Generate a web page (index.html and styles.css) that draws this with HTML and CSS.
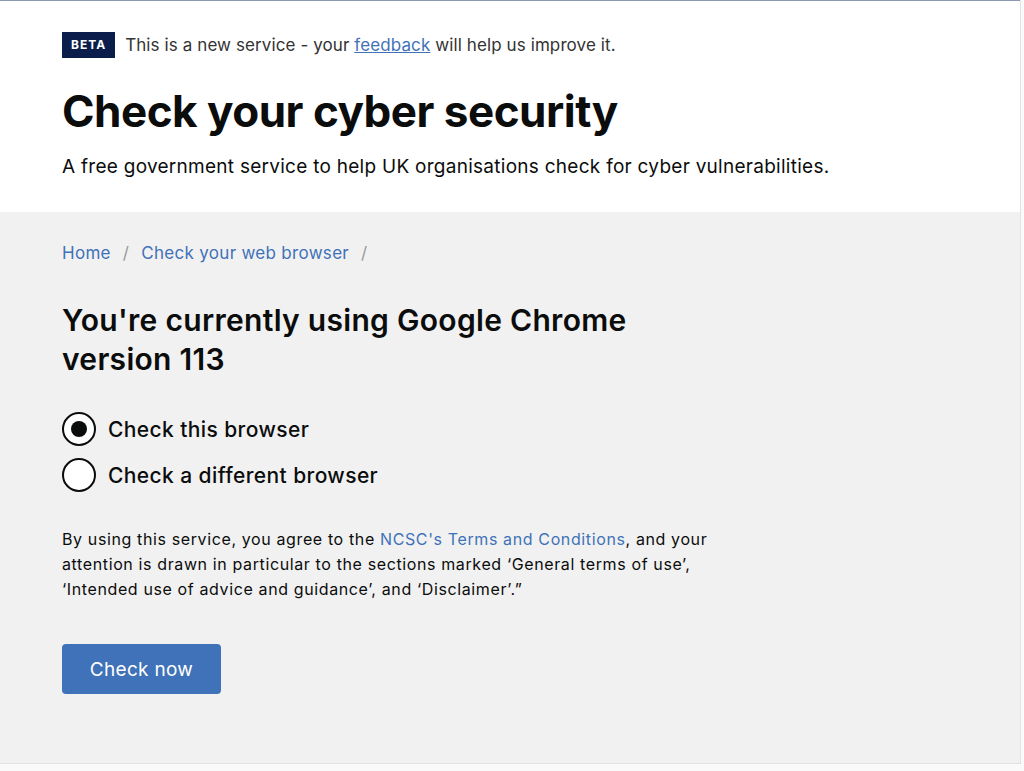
FILE: index.html
```html
<!DOCTYPE html>
<html>
	<head>
		<meta charset='utf-8'/>
		<title>Check your cyber security</title>
		<link rel="stylesheet" href="styles.css">
	</head>
	<body>
		<div class=page>
			<div class=header>
				<div class=phase>
					<strong class=tag>BETA</strong>
					<span>This is a new service - your <a href="#">feedback</a> will help us improve it.</span>
				</div>
				<h1>Check your cyber security</h1>
				<p class=lead>A free government service to help UK organisations check for cyber vulnerabilities.</p>
			</div>
			<div class=main>
				<ol class=crumbs>
					<li><a href="#">Home</a></li>
					<li><a href="#">Check your web browser</a></li>
				</ol>
				<h2>You're currently using Google Chrome version 113</h2>
				<div class=radios>
					<label class=radio><span class="dot checked"></span>Check this browser</label>
					<label class=radio><span class=dot></span>Check a different browser</label>
				</div>
				<p class=terms>By using this service, you agree to the <a href="#">NCSC's Terms and Conditions</a>, and your attention is drawn in particular to the sections marked ‘General terms of use’, ‘Intended use of advice and guidance’, and ‘Disclaimer’.”</p>
				<button class=button>Check now</button>
			</div>
		</div>
	</body>
</html>
```
FILE: styles.css
```css
body {
	margin: 0;
	background: #fafafa;
	font-family: Inter, "Liberation Sans", sans-serif;
	color: #0b0c0c;
}
.page {
	width: 1020px;
	border-right: 1px solid #e2e2e2;
	border-bottom: 1px solid #e2e2e2;
	background: #f1f1f1;
}
a {
	color: #3f72b8;
	text-decoration: none;
}
.header {
	background: #fff;
	border-top: 1px solid #8b98b3;
	padding: 31px 62px 31px;
}
.phase {
	display: flex;
	align-items: center;
	gap: 10px;
	font-size: 17px;
	letter-spacing: 0.1px;
	color: #333;
}
.phase a {
	text-decoration: underline;
}
.tag {
	background: #0b1e4b;
	color: #fff;
	font-size: 12px;
	letter-spacing: 1px;
	padding: 6px 9px 6px;
	line-height: 14px;
}
h1 {
	font-size: 44px;
	font-weight: 700;
	margin: 24px 0 0;
	line-height: 58px;
	letter-spacing: -0.5px;
}
.lead {
	margin: 13px 0 0;
	font-size: 19px;
	letter-spacing: 0.27px;
	line-height: 28px;
}
.main {
	padding: 28px 62px 69px;
	height: 454px;
}
.crumbs {
	list-style: none;
	margin: 0;
	padding: 0;
	display: flex;
	font-size: 17px;
	letter-spacing: 0.3px;
	line-height: 26px;
}
.crumbs li::after {
	content: "/";
	color: #999;
	margin: 0 12px;
}
h2 {
	width: 600px;
	font-size: 30px;
	letter-spacing: 0.3px;
	line-height: 39px;
	font-weight: 600;
	margin: 35px 0 0;
}
.radios {
	margin-top: 33px;
	display: flex;
	flex-direction: column;
	gap: 12px;
}
.radio {
	display: flex;
	align-items: center;
	gap: 12px;
	font-size: 21px;
	letter-spacing: 0.4px;
	font-weight: 500;
}
.dot {
	width: 30px;
	height: 30px;
	border: 2px solid #0b0c0c;
	border-radius: 50%;
	background: #fff;
	display: flex;
	align-items: center;
	justify-content: center;
}
.dot.checked::after {
	content: "";
	width: 16px;
	height: 16px;
	border-radius: 50%;
	background: #0b0c0c;
}
.terms {
	width: 660px;
	margin: 35px 0 0;
	font-size: 16px;
	letter-spacing: 0.62px;
	line-height: 25px;
}
.button {
	margin-top: 42px;
	width: 159px;
	height: 50px;
	border: 0;
	border-radius: 4px;
	background: #3f72b8;
	color: #fff;
	font-family: inherit;
	font-size: 19px;
	letter-spacing: 0.3px;
}
```
